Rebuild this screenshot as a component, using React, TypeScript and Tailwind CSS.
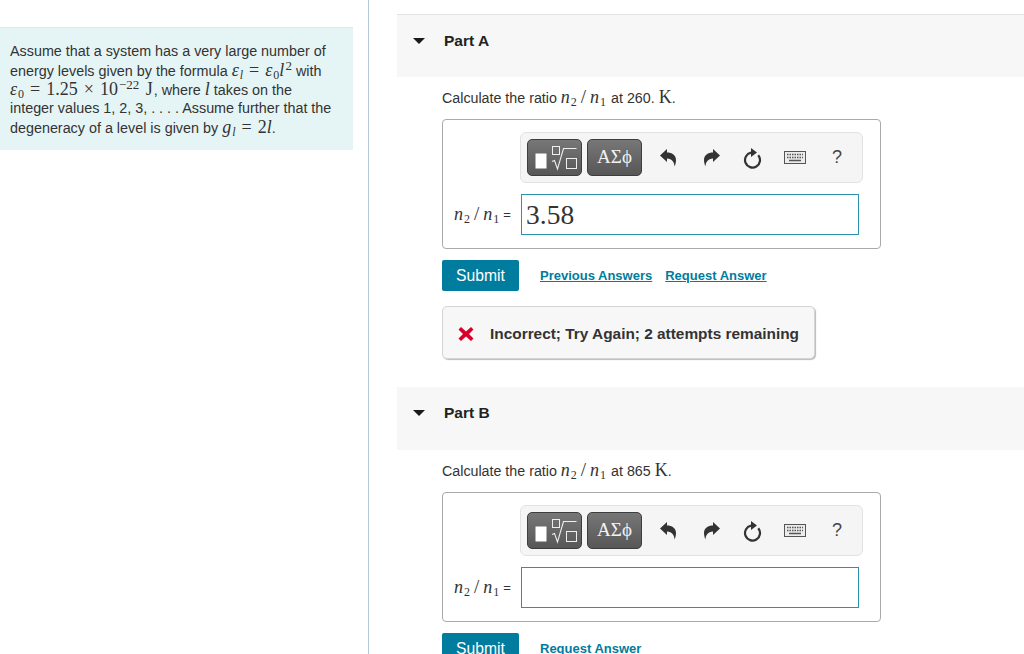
import type { ReactNode } from "react";

const Mv = ({ children }: { children: ReactNode }) => (
  <span className="font-['Liberation_Serif',serif] text-[18px] text-[#333]">{children}</span>
);
const I = ({ children }: { children: ReactNode }) => <i className="font-['Liberation_Serif',serif]">{children}</i>;
const Sub = ({ children }: { children: ReactNode }) => <sub className="ml-[1px] text-[12px]">{children}</sub>;
const Sup = ({ children }: { children: ReactNode }) => <sup className="ml-[1px] text-[13px]">{children}</sup>;
const Op = ({ children }: { children: ReactNode }) => <span className="mx-[6px]">{children}</span>;

const Ratio = () => (
  <Mv>
    <I>n</I>
    <Sub>2</Sub>
    <span className="mx-[4px] text-[19px]">/</span>
    <I>n</I>
    <Sub>1</Sub>
  </Mv>
);

const Line = ({ children }: { children: ReactNode }) => <div className="h-[19px] whitespace-nowrap">{children}</div>;

const Toolbar = () => (
  <div className="ml-[77px] flex h-[51px] w-[343px] items-center rounded-[6px] border border-[#e2e2e2] bg-[#f5f5f5] pl-[6px]">
    <div className="flex h-[37px] w-[55px] items-center justify-center rounded-[5px] border border-[#3d3d3d] bg-gradient-to-b from-[#777] to-[#575757]">
      <svg width="47" height="30" viewBox="0 0 47 30" fill="none">
        <rect x="4.500" y="10.500" width="11" height="15" fill="#fff" />
        <rect x="21.500" y="3.500" width="7" height="8" stroke="#eee" strokeWidth="1" />
        <path d="M21 18.500l2.500-1 3 8.500 6-20.500h13" stroke="#eee" strokeWidth="1.100" />
        <rect x="35.500" y="15.500" width="10" height="10" stroke="#eee" strokeWidth="1" />
      </svg>
    </div>
    <div className="ml-[5px] flex h-[37px] w-[55px] items-center justify-center rounded-[5px] border border-[#3d3d3d] bg-gradient-to-b from-[#777] to-[#575757] font-['Liberation_Serif',serif] text-[19px] text-[#f2f2f2]">
      ΑΣϕ
    </div>
    <svg className="ml-[18px]" width="18" height="18" viewBox="0 0 18 18" fill="#333">
      <path d="M0 6.500L7 0v3.500c5 0 9 2.500 9 7.500 0 2-.5 4.500-1.500 6.500 0-4-2.500-8-7.500-8v3.500z" />
    </svg>
    <svg className="ml-[25px]" width="18" height="18" viewBox="0 0 18 18" fill="#333">
      <path d="M17 6.500L10 0v3.500c-5 0-9 2.500-9 7.500 0 2 .5 4.500 1.500 6.500 0-4 2.500-8 7.500-8v3.500z" />
    </svg>
    <svg className="ml-[22px]" width="20" height="22" viewBox="0 0 20 22" fill="none">
      <path d="M15.250 8.200A7.500 7.500 0 1 1 8 5.700" stroke="#333" strokeWidth="2.200" />
      <path d="M8 1l6 4.500L8 10z" fill="#333" />
    </svg>
    <svg className="ml-[21px]" width="22" height="13" viewBox="0 0 22 13" fill="none">
      <rect x="0.500" y="0.500" width="21" height="12" fill="#ececec" stroke="#555" />
      <path d="M3 3.500h16M3 6.500h16" stroke="#555" strokeWidth="1.500" strokeDasharray="1.500 1" />
      <path d="M5 9.500h12" stroke="#555" strokeWidth="1.500" />
    </svg>
    <span className="ml-[26px] text-[18px] text-[#444]">?</span>
  </div>
);

const AnswerBox = ({ value }: { value?: string }) => (
  <div className="ml-[45px] h-[130px] w-[439px] rounded-[4px] border border-[#a9a9a9] pt-[12px]">
    <Toolbar />
    <div className="mt-[11px] flex items-center pl-[11px]">
      <div className="flex w-[67px] items-center">
        <Ratio />
        <span className="ml-[4px] text-[13px] text-[#333]">=</span>
      </div>
      <div className="flex h-[41px] w-[338px] items-center border border-[#2b91af] pl-[4px] font-['Liberation_Serif',serif] text-[27.500px] text-[#333]">
        {value}
      </div>
    </div>
  </div>
);

const PartHeader = ({ label, top }: { label: string; top?: boolean }) => (
  <div className={`flex h-[63px] items-start bg-[#f7f7f7] pt-[16px] ${top ? "border-t border-[#e3e3e3]" : ""}`}>
    <svg className="ml-[16px] mt-[7px]" width="12" height="6" viewBox="0 0 12 6" fill="#1a1a1a">
      <path d="M0 0h12L6 6z" />
    </svg>
    <span className="ml-[19px] text-[15.500px] font-bold leading-[20px] text-[#222]">{label}</span>
  </div>
);

const SubmitBtn = () => (
  <button className="ml-[45px] h-[31px] w-[77px] rounded-[2px] bg-[#007c9e] text-[15.700px] text-white">Submit</button>
);

const A = ({ children }: { children: ReactNode }) => (
  <a className="text-[13px] font-bold text-[#007c9e] underline">{children}</a>
);

export default function App() {
  return (
    <div className="flex h-[654px] w-[1024px] overflow-hidden bg-white font-['Liberation_Sans',sans-serif] text-[#333]">
      <aside className="w-[369px] shrink-0 border-r border-[#b6c8d6] pt-[27px]">
        <div className="h-[123px] w-[353px] border-t border-[#dfe8e8] bg-[#e5f5f6] pl-[10px] pt-[14px] text-[14.350px] leading-[19px]">
          <Line>Assume that a system has a very large number of</Line>
          <Line>
            energy levels given by the formula{" "}
            <Mv>
              <I>ε</I>
              <Sub>
                <I>l</I>
              </Sub>
              <Op>=</Op>
              <I>ε</I>
              <Sub>0</Sub>
              <I>l</I>
              <Sup>2</Sup>
            </Mv>{" "}
            with
          </Line>
          <Line>
            <Mv>
              <I>ε</I>
              <Sub>0</Sub>
              <Op>=</Op>1.25<Op>×</Op>10<Sup>−22</Sup> <span className="ml-[2px]">J</span>
            </Mv>
            <span className="ml-[1px]">, where</span>{" "}
            <Mv>
              <I>l</I>
            </Mv>{" "}
            takes on the
          </Line>
          <Line>integer values 1, 2, 3, . . . . Assume further that the</Line>
          <Line>
            degeneracy of a level is given by{" "}
            <Mv>
              <I>g</I>
              <Sub>
                <I>l</I>
              </Sub>
              <Op>=</Op>2<I>l</I>
            </Mv>
            .
          </Line>
        </div>
      </aside>

      <main className="flex-1 pl-[28px] pt-[14px]">
        <PartHeader label="Part A" top />
        <p className="ml-[45px] mt-[10px] h-[32px] text-[14.250px] leading-[20px]">
          Calculate the ratio <Ratio /> <span className="ml-[1px]">at 260.</span> <Mv>K</Mv>.
        </p>
        <AnswerBox value="3.58" />
        <div className="mt-[11px] flex items-center">
          <SubmitBtn />
          <div className="ml-[21px] flex gap-[13px]">
            <A>Previous Answers</A>
            <A>Request Answer</A>
          </div>
        </div>
        <div className="ml-[45px] mt-[15px] flex h-[53px] w-[373px] items-center rounded-[5px] border border-[#d5d5d5] bg-[#f7f7f7] pl-[15px] pt-[2px] shadow-[1px_1px_1px_#bbb]">
          <svg width="16" height="16" viewBox="0 0 16 16">
            <path d="M3 1l5 4.500L13 1l2.500 2.500L11 8l4.500 4.500L13 15l-5-4.500L3 15 .5 12.500 5 8 .5 3.500z" fill="#d8002a" />
          </svg>
          <span className="ml-[16px] text-[15.400px] font-bold text-[#333]">Incorrect; Try Again; 2 attempts remaining</span>
        </div>

        <div className="mt-[28px]">
          <PartHeader label="Part B" />
        </div>
        <p className="ml-[45px] mt-[10px] h-[32px] text-[14.250px] leading-[20px]">
          Calculate the ratio <Ratio /> <span className="ml-[1px]">at 865</span> <Mv>K</Mv>.
        </p>
        <AnswerBox />
        <div className="mt-[11px] flex items-center">
          <SubmitBtn />
          <div className="ml-[21px] flex gap-[13px]">
            <A>Request Answer</A>
          </div>
        </div>
      </main>
    </div>
  );
}
